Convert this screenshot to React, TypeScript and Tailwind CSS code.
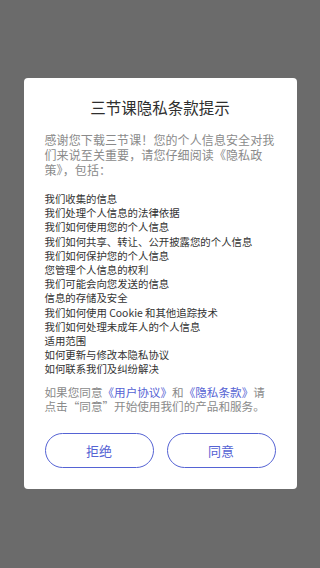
import React from "react";

const items = [
  "我们收集的信息",
  "我们处理个人信息的法律依据",
  "我们如何使用您的个人信息",
  "我们如何共享、转让、公开披露您的个人信息",
  "我们如何保护您的个人信息",
  "您管理个人信息的权利",
  "我们可能会向您发送的信息",
  "信息的存储及安全",
  "我们如何使用 Cookie 和其他追踪技术",
  "我们如何处理未成年人的个人信息",
  "适用范围",
  "如何更新与修改本隐私协议",
  "如何联系我们及纠纷解决",
];

export default function App() {
  return (
    <div
      className="w-[320px] h-[568px] bg-[#6b6b6b] flex flex-col items-center pt-[78px]"
      style={{ fontFamily: '"Noto Sans CJK SC", "Noto Sans", sans-serif' }}
    >
      <div className="w-[273px] h-[411px] bg-white rounded-[4px] flex flex-col px-[21px]">
        <div className="pt-[19px] text-[15.5px] leading-[20px] text-[#2e2e2e] text-center">
          三节课隐私条款提示
        </div>
        <p className="mt-[15px] text-[12px] leading-[15px] text-[#8a8a8a] tracking-[0.1px]">
          感谢您下载三节课！您的个人信息安全对我们来说至关重要，请您仔细阅读《隐私政策》，包括：
        </p>
        <ul className="mt-[15px] text-[10.4px] leading-[14.2px] text-[#333]">
          {items.map((t) => (
            <li key={t} className="whitespace-nowrap">{t}</li>
          ))}
        </ul>
        <div className="mt-[9.5px] text-[11.6px] leading-[13.5px] text-[#8a8a8a]">
          <div className="whitespace-nowrap">
            如果您同意<span className="text-[#5563d4]">《用户协议》</span>和<span className="text-[#5563d4]">《隐私条款》</span>请
          </div>
          <div className="whitespace-nowrap">点击“同意”开始使用我们的产品和服务。</div>
        </div>
        <div className="mt-[20px] flex justify-between">
          <button className="w-[109px] h-[35px] rounded-full border border-[#5563d4] text-[#5563d4] text-[13px] bg-white">
            拒绝
          </button>
          <button className="w-[109px] h-[35px] rounded-full border border-[#5563d4] text-[#5563d4] text-[13px] bg-white">
            同意
          </button>
        </div>
      </div>
    </div>
  );
}
